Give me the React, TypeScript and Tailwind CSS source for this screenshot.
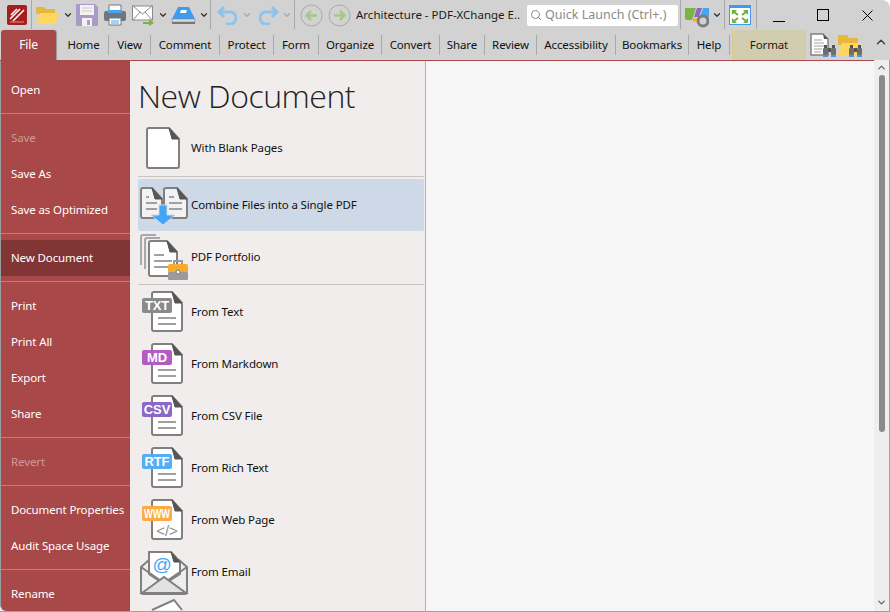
import { ChevronDown, ChevronUp, Search } from 'lucide-react';

const font = 'font-["Noto_Sans","Open_Sans",sans-serif]';

const tabs = [
  ['Home', 'w-[50px]'],
  ['View', 'w-[42px]'],
  ['Comment', 'w-[69px]'],
  ['Protect', 'w-[54px]'],
  ['Form', 'w-[45px]'],
  ['Organize', 'w-[63px]'],
  ['Convert', 'w-[58px]'],
  ['Share', 'w-[45px]'],
  ['Review', 'w-[52px]'],
  ['Accessibility', 'w-[79px]'],
  ['Bookmarks', 'w-[73px]'],
  ['Help', 'w-[41px]'],
];

const sideGroups = [
  [{ label: 'Open' }],
  [{ label: 'Save', off: true }, { label: 'Save As' }, { label: 'Save as Optimized' }],
  [{ label: 'New Document', on: true }],
  [{ label: 'Print' }, { label: 'Print All' }, { label: 'Export' }, { label: 'Share' }],
  [{ label: 'Revert', off: true }],
  [{ label: 'Document Properties' }, { label: 'Audit Space Usage' }],
  [{ label: 'Rename' }],
];

const Caret = ({ dim }: { dim?: boolean }) => (
  <ChevronDown size={10} strokeWidth={3} className={dim ? 'text-[#a8a8a8]' : 'text-[#333333]'} />
);

// base sheet with folded corner, used by nearly every entry of the list
const Sheet = ({ x, y, w, h, lines, fill = '#ffffff' }: { x: number; y: number; w: number; h: number; lines?: boolean; fill?: string }) => (
  <g>
    <path
      d={`M${x + 2} ${y}H${x + w - 10}L${x + w} ${y + 11}V${y + h - 2}a2 2 0 0 1 -2 2H${x + 2}a2 2 0 0 1 -2 -2V${y + 2}a2 2 0 0 1 2 -2z`}
      fill={fill}
      stroke="#808080"
      strokeWidth="2"
    />
    <path d={`M${x + w - 10} ${y}L${x + w} ${y + 11}H${x + w - 7}z`} fill="#555555" stroke="#555555" />
    {lines && (
      <path
        d={`M${x + 5} ${y + h - 15}H${x + w - 5}M${x + 5} ${y + h - 9}H${x + w - 5}M${x + 5} ${y + h - 21}H${x + w - 13}`}
        stroke="#a0a0a0"
        strokeWidth="2"
      />
    )}
  </g>
);

const BadgeDoc = ({ text, color, web }: { text: string; color: string; web?: boolean }) => (
  <svg width="52" height="52" viewBox="0 0 52 52">
    <path d="M16 6H34L44 17V43a2 2 0 0 1 -2 2H16a2 2 0 0 1 -2 -2V8a2 2 0 0 1 2 -2z" fill="#ffffff" stroke="#808080" strokeWidth="2" />
    <path d="M34 6L44 17H37z" fill="#555555" stroke="#555555" />
    {web ? (
      <text x="29" y="42" textAnchor="middle" fontSize="15" fill="#8f8f8f" fontFamily="Liberation Sans, sans-serif">
        {'</>'}
      </text>
    ) : (
      <path d="M20 32H38M20 38H38" stroke="#a0a0a0" strokeWidth="2" />
    )}
    <rect x="4" y="12" width="30" height="15" rx="2" fill={color} />
    {web ? (
      <text x="6" y="24" textLength="26" lengthAdjust="spacingAndGlyphs" fontSize="13" fontWeight="700" fill="#ffffff" fontFamily="Liberation Sans, sans-serif">
        {text}
      </text>
    ) : (
      <text x="19" y="24" textAnchor="middle" fontSize="13" fontWeight="700" fill="#ffffff" fontFamily="Liberation Sans, sans-serif">
        {text}
      </text>
    )}
  </svg>
);

const rowIcons: Record<string, React.ReactNode> = {
  blank: (
    <svg width="52" height="52" viewBox="0 0 52 52">
      <Sheet x={9} y={6} w={32} h={40} />
    </svg>
  ),
  combine: (
    <svg width="52" height="52" viewBox="0 0 52 52">
      <Sheet x={3} y={9} w={21} h={30} lines fill="#f2f2f2" />
      <Sheet x={26} y={9} w={23} h={30} lines fill="#f2f2f2" />
      <path d="M21 26H29V36H37L25 46L13 36H21z" fill="#45a5f5" stroke="#cdd9e7" />
    </svg>
  ),
  portfolio: (
    <svg width="52" height="52" viewBox="0 0 52 52">
      <path d="M18 4H5a2 2 0 0 0 -2 2V34" fill="none" stroke="#a8a8a8" strokeWidth="2" />
      <path d="M22 7H9a2 2 0 0 0 -2 2V38" fill="none" stroke="#a8a8a8" strokeWidth="2" />
      <Sheet x={11} y={10} w={28} h={35} lines />
      <rect x="30" y="33" width="20" height="9" rx="2" fill="#f6ab2f" />
      <rect x="30" y="41" width="20" height="8" rx="1" fill="#9a9a9a" />
      <path d="M36 33V30H44V33" fill="none" stroke="#9a9a9a" strokeWidth="2" />
      <circle cx="40" cy="41" r="2" fill="#ffffff" stroke="#777777" />
    </svg>
  ),
  txt: <BadgeDoc text="TXT" color="#8a8a8a" />,
  md: <BadgeDoc text="MD" color="#b45cc4" />,
  csv: <BadgeDoc text="CSV" color="#8c66c8" />,
  rtf: <BadgeDoc text="RTF" color="#55aef5" />,
  www: <BadgeDoc text="WWW" color="#fbab45" web />,
  email: (
    <svg width="52" height="52" viewBox="0 0 52 52">
      <path d="M3 21L11 14H41L49 21V46a2 2 0 0 1 -2 2H5a2 2 0 0 1 -2 -2z" fill="#eeeeee" stroke="#808080" strokeWidth="2" />
      <path d="M11 28V6H33L42 16V28L26 38z" fill="#ffffff" stroke="#808080" strokeWidth="2" />
      <path d="M33 6L42 16H36z" fill="#555555" stroke="#555555" />
      <path d="M3 21L26 37L49 21" fill="none" stroke="#808080" strokeWidth="2" />
      <path d="M4 47L26 31L48 47z" fill="#e2e2e2" stroke="#808080" strokeWidth="2" />
      <text x="24" y="25" textAnchor="middle" fontSize="19" fill="#45a5f5" fontFamily="Liberation Sans, sans-serif">
        @
      </text>
    </svg>
  ),
};

const rows: { key: string; label: string; hot?: boolean; line?: string }[] = [
  { key: 'blank', label: 'With Blank Pages', line: 'my-[2px]' },
  { key: 'combine', label: 'Combine Files into a Single PDF', hot: true },
  { key: 'portfolio', label: 'PDF Portfolio', line: 'my-px' },
  { key: 'txt', label: 'From Text' },
  { key: 'md', label: 'From Markdown' },
  { key: 'csv', label: 'From CSV File' },
  { key: 'rtf', label: 'From Rich Text' },
  { key: 'www', label: 'From Web Page' },
  { key: 'email', label: 'From Email' },
];

const Binoculars = () => (
  <g>
    <rect x="1" y="0" width="3" height="4" fill="#555555" />
    <rect x="9" y="0" width="3" height="4" fill="#555555" />
    <rect x="0" y="3" width="5" height="7" rx="1" fill="#6e6e6e" />
    <rect x="8" y="3" width="5" height="7" rx="1" fill="#6e6e6e" />
    <rect x="5" y="3" width="3" height="4" fill="#555555" />
    <rect x="0" y="10" width="5" height="2" fill="#3f9bef" />
    <rect x="8" y="10" width="5" height="2" fill="#3f9bef" />
  </g>
);

const App = () => {
  return (
    <div className={`${font} w-[890px] h-[612px] overflow-hidden flex flex-col bg-[#d2d2d2] text-[11.5px] tracking-[-0.12px] text-[#1a1a1a] rounded-tr-lg`}>
      {/* title bar with quick access */}
      <div className="h-[30px] flex items-center shrink-0 pl-[7px]">
        <svg width="20" height="20" viewBox="0 0 20 20">
          <rect width="20" height="20" rx="2" fill="#a51f1f" />
          <path d="M3 14L13 4M6 16L17 5M4 10L10 4" stroke="#ffffff" strokeWidth="1.500" />
          <path d="M3 17H17" stroke="#e58a8a" />
        </svg>
        <div className="w-px h-[29px] self-start bg-[#a8a8a8] mx-[4px]" />
        <svg width="24" height="20" viewBox="0 0 24 20">
          <path d="M0 3a1 1 0 0 1 1 -1H8L10 4H19V9H0z" fill="#e7b63c" />
          <path d="M0 19L4 8H24L19 19z" fill="#ffd75e" />
        </svg>
        <div className="ml-[3px] mr-[3px]"><Caret /></div>
        <svg width="22" height="22" viewBox="0 0 22 22">
          <path d="M1 0H19L22 3V21a1 1 0 0 1 -1 1H1a1 1 0 0 1 -1 -1V1a1 1 0 0 1 1 -1z" fill="#a99ac8" />
          <rect x="4" y="1" width="14" height="10" fill="#f2f2f2" />
          <path d="M6 4H16M6 7H16" stroke="#cccccc" />
          <rect x="6" y="14" width="10" height="8" fill="#f2f2f2" />
          <rect x="11" y="16" width="3" height="5" fill="#a99ac8" />
        </svg>
        <svg width="22" height="22" viewBox="0 0 22 22" className="ml-[6px]">
          <path d="M5 8V1H17V8z" fill="#ffffff" stroke="#777777" />
          <rect x="0" y="7" width="22" height="10" rx="2" fill="#6e7780" />
          <rect x="4" y="6" width="14" height="3" fill="#4aa5f0" />
          <path d="M5 14H17V21H5z" fill="#ffffff" stroke="#777777" />
          <path d="M7 17H15M7 19H15" stroke="#4aa5f0" />
        </svg>
        <svg width="24" height="22" viewBox="0 0 24 22" className="ml-[6px]">
          <rect x="0.500" y="2" width="20" height="14" fill="#ffffff" stroke="#8a8a8a" />
          <path d="M1 2L10.500 10L20 2M1 16L8 8M20 16L13 8" fill="none" stroke="#8a8a8a" />
          <path d="M11 18H17V15L22 19L17 22V20H11z" fill="#7cb342" />
        </svg>
        <div className="ml-[2px] mr-[3px]"><Caret /></div>
        <svg width="25" height="20" viewBox="0 0 25 20">
          <path d="M7 2H18L24 14H1z" fill="#3f9bef" />
          <path d="M10 5H16L15 8H9z" fill="#ffffff" />
          <rect x="1" y="14" width="23" height="3" fill="#dcdcdc" stroke="#777777" strokeWidth="0.500" />
          <rect x="1" y="17" width="23" height="2" fill="#777777" />
        </svg>
        <div className="ml-[3px] mr-px"><Caret /></div>
        <div className="w-px h-[29px] self-start bg-[#a8a8a8] mr-[6px]" />
        <svg width="21" height="20" viewBox="0 0 21 20">
          <path d="M7 2L2 7L7 12M2 7H13a6 6 0 0 1 0 12H9" fill="none" stroke="#8cc4ee" strokeWidth="3" />
        </svg>
        <div className="ml-[4px] mr-[6px]"><Caret dim /></div>
        <svg width="21" height="20" viewBox="0 0 21 20">
          <path d="M14 2L19 7L14 12M19 7H8a6 6 0 0 0 0 12H12" fill="none" stroke="#8cc4ee" strokeWidth="3" />
        </svg>
        <div className="ml-[3px] mr-[2px]"><Caret dim /></div>
        <div className="w-px h-[29px] self-start bg-[#a8a8a8] mr-[5px]" />
        <svg width="23" height="23" viewBox="0 0 23 23">
          <circle cx="11.500" cy="11.500" r="10.500" fill="none" stroke="#a8a8a8" />
          <path d="M17 11.500H7M11 7L6.500 11.500L11 16" fill="none" stroke="#a5c88c" strokeWidth="2.500" />
        </svg>
        <svg width="23" height="23" viewBox="0 0 23 23" className="ml-[5px]">
          <circle cx="11.500" cy="11.500" r="10.500" fill="none" stroke="#a8a8a8" />
          <path d="M6 11.500H16M12 7L16.500 11.500L12 16" fill="none" stroke="#a5c88c" strokeWidth="2.500" />
        </svg>
        <div className="w-[171px] ml-[5px] whitespace-nowrap tracking-normal">Architecture - PDF-XChange E..</div>
        <div className="w-[151px] h-[21px] bg-white rounded-[2px] flex items-center gap-[3px] px-[3px] text-[#8a8a8a] text-[12.5px] tracking-normal">
          <Search size={12} className="text-[#8a8a8a]" />
          <span>Quick Launch (Ctrl+.)</span>
        </div>
        <div className="w-px h-[29px] self-start bg-[#a8a8a8] ml-[2px] mr-[4px]" />
        <svg width="24" height="26" viewBox="0 0 24 26">
          <path d="M0 6H11L7 18H2a2 2 0 0 1 -2 -2z" fill="#7cb342" />
          <path d="M12 6H17L14 15H9z" fill="#8c66c8" />
          <path d="M18 6H24V15H15z" fill="#4aa5f0" />
          <circle cx="18" cy="19" r="5" fill="none" stroke="#7d7d7d" strokeWidth="3" />
          <path d="M8 18H12" stroke="#f6ab2f" strokeWidth="3" />
        </svg>
        <div className="ml-[3px] mr-[2px]"><Caret /></div>
        <div className="w-px h-[29px] self-start bg-[#a8a8a8] mr-[4px]" />
        <svg width="22" height="20" viewBox="0 0 22 20">
          <rect x="0.500" y="0.500" width="21" height="19" fill="#ffffff" stroke="#3f9bef" />
          <rect x="0" y="0" width="22" height="3" fill="#3f9bef" />
          <path d="M3 5H8L3 10zM19 5H14L19 10zM3 18H8L3 13zM19 18H14L19 13z" fill="#6fae3f" />
          <path d="M5 7L9 10M17 7L13 10M5 16L9 13M17 16L13 13" stroke="#6fae3f" strokeWidth="2" />
        </svg>
        <div className="w-px h-[29px] self-start bg-[#a8a8a8] ml-[5px]" />
        <svg width="12" height="12" viewBox="0 0 12 12" className="ml-[16px] mt-[3px]">
          <path d="M0 10.500H12" stroke="#000000" />
        </svg>
        <svg width="12" height="12" viewBox="0 0 12 12" className="ml-[32px]">
          <rect x="0.500" y="0.500" width="11" height="11" fill="none" stroke="#000000" />
        </svg>
        <svg width="11" height="11" viewBox="0 0 11 11" className="ml-[33px]">
          <path d="M0.500 0.500L10.500 10.500M10.500 0.500L0.500 10.500" stroke="#000000" />
        </svg>
      </div>

      {/* ribbon tabs */}
      <div className="h-[30px] flex items-stretch shrink-0 pl-px">
        <div className="w-[55px] bg-[#a84848] text-white flex items-center justify-center rounded-t-[3px] text-[12px] shadow-[1px_0_1px_#999999]">File</div>
        <div className="w-[3px]" />
        <div className="flex items-center h-[30px]">
          {tabs.map(([name, w]) => (
            <div key={name} className={`${w} h-[20px] flex items-center justify-center border-r border-[#a8a8a8] text-[#111111]`}>
              {name}
            </div>
          ))}
        </div>
        <div className="w-[2px]" />
        <div className="w-[74px] bg-[#d3cdb0] flex items-center justify-center border-x border-[#dcc98a]">Format</div>
        <svg width="26" height="28" viewBox="0 0 26 28" className="ml-[4px] mt-[2px]">
          <path d="M1 2H13L18 7V23H1z" fill="#ffffff" stroke="#808080" strokeWidth="1.500" />
          <path d="M13 2L18 7H14z" fill="#555555" />
          <path d="M4 8H12M4 11H14M4 14H14M4 17H12M4 20H11" stroke="#a0a0a0" />
          <g transform="translate(13,13)"><Binoculars /></g>
        </svg>
        <svg width="26" height="28" viewBox="0 0 26 28" className="mt-[2px]">
          <path d="M2 3H11L13 6H22V13H2z" fill="#e7b63c" />
          <path d="M2 23L6 11H25L20 23z" fill="#ffd75e" />
          <g transform="translate(13,13)"><Binoculars /></g>
        </svg>
        <ChevronUp size={14} strokeWidth={2.500} className="ml-[12px] mt-[5px] text-[#444444]" />
      </div>

      {/* backstage body */}
      <div className="flex-1 min-h-0 flex border-b border-[#a0a0a0] bg-[#f6f6f6]">
        <div className="flex-1 min-w-0 flex border-t border-[#a84848]">
          <div className="w-[130px] shrink-0 bg-[#a84848] border-l border-[#9aa0a0] text-white pt-[11px] overflow-hidden rounded-bl-[6px]">
            {sideGroups.map((group, i) => (
              <div key={i} className={i > 0 ? 'border-t border-[#c27a7a] pt-[6px] mt-[5px]' : ''}>
                {group.map((item) => (
                  <div
                    key={item.label}
                    className={`h-[36px] flex items-center pl-[10px] whitespace-nowrap ${item.on ? 'bg-[#823535]' : ''} ${item.off ? 'text-[#d09a9a]' : ''}`}
                  >
                    {item.label}
                  </div>
                ))}
              </div>
            ))}
          </div>

          <div className="w-[296px] shrink-0 bg-[#f0edec] border-r border-[#b4b0b0] pl-[8px] pr-px overflow-hidden">
            <h1 className='font-["Open_Sans",sans-serif] font-light text-[32px] leading-[44px] h-[44px] mt-[13px] tracking-[-0.5px] text-[#222222]'>New Document</h1>
            <div className="mt-[4px]">
              {rows.map((row) => (
                <div key={row.key}>
                  <div className={`h-[52px] flex items-center rounded-[2px] ${row.hot ? 'bg-[#cdd9e7]' : ''}`}>
                    <div className="w-[53px] h-[52px] shrink-0">{rowIcons[row.key]}</div>
                    <span className="text-[#111111]">{row.label}</span>
                  </div>
                  {row.line && <div className={`h-px bg-[#c8c4c2] ${row.line}`} />}
                </div>
              ))}
              <svg width="52" height="52" viewBox="0 0 52 52">
                <path d="M14 12L36 2L44 12" fill="#ffffff" stroke="#808080" strokeWidth="2" />
              </svg>
            </div>
          </div>

          <div className="flex-1" />
        </div>

        <div className="w-[16px] shrink-0 bg-[#eeeeee] border-r border-[#a0a0a0] flex flex-col items-center pt-[2px]">
          <ChevronUp size={11} strokeWidth={3} className="text-[#666666]" />
          <div className="w-[6px] h-[357px] mt-[2px] rounded-full bg-[#8a8a8a]" />
          <ChevronDown size={11} strokeWidth={3} className="text-[#666666] mt-auto mb-[3px]" />
        </div>
      </div>
    </div>
  );
};

export default App;
